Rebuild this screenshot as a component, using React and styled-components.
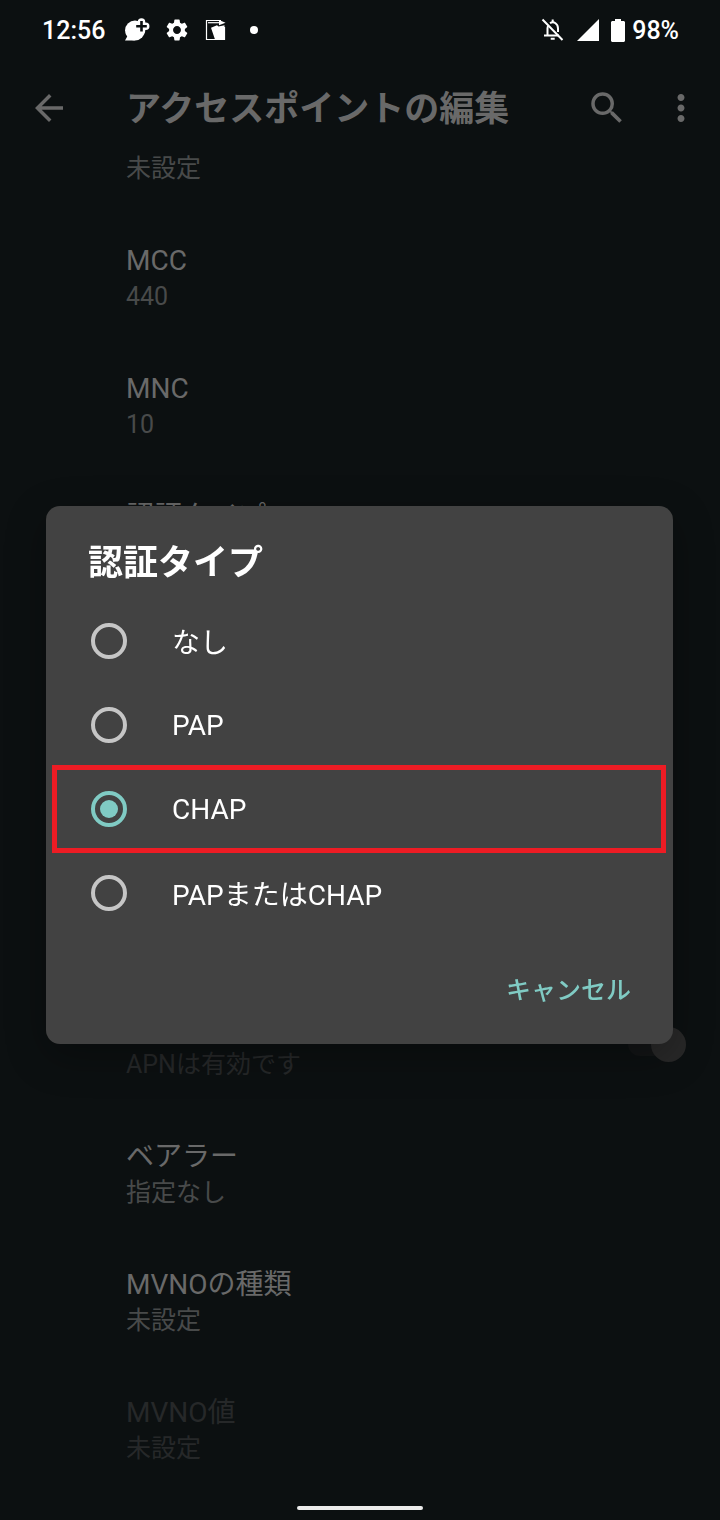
import styled, { createGlobalStyle, css } from 'styled-components';
import { MdArrowBack, MdMoreVert, MdSearch, MdSettings } from 'react-icons/md';

const GlobalStyle = createGlobalStyle`
  * {
    box-sizing: border-box;
  }
  body {
    margin: 0;
    background-color: #0c1011;
    color: #696969;
    font-family: Roboto, "Noto Sans CJK JP", sans-serif;
  }
`;

const Screen = styled.div`
  display: flex;
  flex-direction: column;
  min-height: 100vh;
`;

const StatusBar = styled.header`
  display: flex;
  justify-content: space-between;
  height: 64px;
  padding: 0 41px 4px 42px;
  color: white;
  font-size: 25px;
  font-weight: 500;
`;

const StatusGroup = styled.div`
  display: flex;
  align-items: center;
  gap: ${props => props.$gap};

  svg {
    display: block;
  }
`;

const AppBar = styled.div`
  display: flex;
  align-items: center;
  height: 87px;
  padding: 0 18px 0 28px;
`;

const IconButton = styled.button`
  display: flex;
  padding: 0;
  border: 0;
  background: none;
  color: #696969;
  font-size: 42px;
`;

const PageTitle = styled.h1`
  flex: 1;
  margin: 0 0 0 56px;
  padding-top: 4px;
  font-size: 35px;
  font-weight: 700;
  line-height: 48px;
`;

const AppBarActions = styled.div`
  display: flex;
  gap: 32px;
`;

const List = styled.ul`
  flex: 1;
  margin: 0;
  padding: 0;
  list-style: none;
`;

const Preference = styled.li`
  display: flex;
  align-items: flex-start;
  justify-content: space-between;
  min-height: 128px;
  padding: 28px 34px 28px 126px;

  ${props => props.$scrolled && css`
    min-height: 64px;
    padding-top: 0;
  `}
  ${props => props.$below && css`
    align-items: center;
    margin-top: 384px;
    padding-top: 22px;
  `}
`;

const PrefText = styled.label`
  align-self: ${props => (props.$end ? 'flex-end' : 'flex-start')};
`;

const PrefTitle = styled.div`
  color: ${props => (props.$disabled ? '#262829' : '#696969')};
  font-size: 28px;
  line-height: 36px;
`;

const PrefSummary = styled.div`
  color: ${props => (props.$disabled ? '#262829' : '#484a4a')};
  font-size: 25px;
  line-height: 36px;
`;

const Switch = styled.input`
  appearance: none;
  display: flex;
  align-items: center;
  justify-content: flex-end;
  width: 58px;
  height: 24px;
  margin: 0;
  border-radius: 12px;
  background-color: #131516;

  &::before {
    content: "";
    width: 35px;
    height: 35px;
    flex: none;
    border-radius: 50%;
    background-color: #282828;
  }
`;

const NavBar = styled.footer`
  display: flex;
  align-items: center;
  justify-content: center;
  height: 25px;
`;

const HomeHandle = styled.div`
  width: 126px;
  height: 4px;
  border-radius: 2px;
  background-color: #ececec;
`;

const Overlay = styled.div`
  position: fixed;
  inset: 0;
  display: flex;
  align-items: center;
  padding: 30px 47px 0 46px;
`;

const Dialog = styled.form`
  flex: 1;
  border-radius: 14px;
  background-color: #424242;
  box-shadow: 0 12px 40px rgba(0, 0, 0, 0.3);
  color: white;
`;

const DialogTitle = styled.h2`
  margin: 0;
  padding: 38px 42px 15px;
  font-size: 35px;
  font-weight: 700;
  line-height: 40px;
`;

const Option = styled.label`
  position: relative;
  display: flex;
  align-items: center;
  gap: 45px;
  height: 84px;
  padding: 0 45px;
  font-size: 28px;

  ${props => props.$marked && css`
    &::after {
      content: "";
      position: absolute;
      inset: -2px 7px -2px 6px;
      border: 5px solid #ed1c24;
    }
  `}
`;

const Radio = styled.input`
  appearance: none;
  width: 36px;
  height: 36px;
  margin: 0;
  padding: 5px;
  border: 4px solid #c6c6c6;
  border-radius: 50%;

  &:checked {
    border-color: #80cbc4;
    background: #80cbc4 content-box;
  }
`;

const DialogActions = styled.div`
  display: flex;
  justify-content: flex-end;
  padding: 23px 42px 26px;
`;

const TextButton = styled.button`
  height: 60px;
  padding: 0;
  border: 0;
  background: none;
  color: #80cbc4;
  font: inherit;
  font-size: 25px;
  font-weight: 500;
`;

const ChatPlusIcon = () => (
  <svg width="26" height="24" viewBox="0 0 26 24">
    <circle cx="11" cy="12.5" r="10" fill="white" />
    <path d="M1.500 14L3.500 18L1 22.500H11Z" fill="white" />
    <path d="M17.500 4V12.500M13.300 8.300H21.700" stroke="white" strokeWidth="7.500" strokeLinecap="round" />
    <path d="M17.500 3V13.600M12.200 8.300H22.800" stroke="#0c1011" strokeWidth="2.600" />
  </svg>
);

const CardsIcon = () => (
  <svg width="22" height="22" viewBox="0 0 22 22">
    <path d="M17 1.500H2.500V20.500H20.500V8" fill="none" stroke="white" strokeWidth="1.200" />
    <path d="M4 3.700H16" stroke="white" strokeWidth="1.200" />
    <path fill="white" d="M15 1L21.500 3.700L15 6.200Z" />
    <path fill="white" d="M7 8.800L13 6.300L14.500 7.500L20.500 6.300V20.500H11Z" />
  </svg>
);

const DotIcon = () => (
  <svg width="24" height="10" viewBox="0 0 24 10">
    <circle cx="12" cy="5" r="4" fill="white" />
  </svg>
);

const BellOffIcon = () => (
  <svg width="24" height="24" viewBox="0 0 24 24" fill="none" stroke="white" strokeWidth="2">
    <path d="M6.500 17.500V10.500C6.500 9.500 6.700 8.500 7.200 7.700M9 5.200C13 2.800 17 6 17 10.500V14M3 17.500H18" />
    <path d="M11.700 1.500V4.500M9.700 20.700H13.700M1.500 1.500L21.500 22" />
  </svg>
);

const SignalIcon = () => (
  <svg width="22" height="22" viewBox="0 0 22 22">
    <path fill="white" d="M0 22L22 0V22Z" />
  </svg>
);

const BatteryIcon = () => (
  <svg width="14" height="23" viewBox="0 0 14 23">
    <path fill="white" d="M4 0H10V2H13L14 3V22L13 23H1L0 22V3L1 2H4Z" />
  </svg>
);

const preferences = [
  { id: 'mcc', title: 'MCC', summary: '440' },
  { id: 'mnc', title: 'MNC', summary: '10' },
  { id: 'auth', title: '認証タイプ' },
  { id: 'apn', summary: 'APNは有効です', disabled: true, below: true, toggle: true },
  { id: 'bearer', title: 'ベアラー', summary: '指定なし' },
  { id: 'mvno-type', title: 'MVNOの種類', summary: '未設定' },
  { id: 'mvno-value', title: 'MVNO値', summary: '未設定', disabled: true },
];

const options = ['なし', 'PAP', 'CHAP', 'PAPまたはCHAP'];

const App = () => {
  return (
    <>
      <GlobalStyle />
      <Screen>
        <StatusBar>
          <StatusGroup $gap="19px">
            <span>12:56</span>
            <StatusGroup $gap="16px">
              <ChatPlusIcon />
              <MdSettings size={22} viewBox="2 2 20 20" />
              <CardsIcon />
              <DotIcon />
            </StatusGroup>
          </StatusGroup>
          <StatusGroup $gap="7px">
            <StatusGroup $gap="12px">
              <BellOffIcon />
              <SignalIcon />
              <BatteryIcon />
            </StatusGroup>
            <span>98%</span>
          </StatusGroup>
        </StatusBar>
        <AppBar>
          <IconButton aria-label="戻る"><MdArrowBack /></IconButton>
          <PageTitle>アクセスポイントの編集</PageTitle>
          <AppBarActions>
            <IconButton aria-label="検索"><MdSearch /></IconButton>
            <IconButton aria-label="メニュー"><MdMoreVert /></IconButton>
          </AppBarActions>
        </AppBar>
        <List>
          <Preference $scrolled>
            <PrefSummary>未設定</PrefSummary>
          </Preference>
          {preferences.map(pref => (
            <Preference key={pref.id} $below={pref.below}>
              <PrefText
                as={pref.toggle ? 'label' : 'div'}
                htmlFor={pref.toggle ? pref.id : undefined}
                $end={pref.below}
              >
                {pref.title && <PrefTitle $disabled={pref.disabled}>{pref.title}</PrefTitle>}
                {pref.summary && <PrefSummary $disabled={pref.disabled}>{pref.summary}</PrefSummary>}
              </PrefText>
              {pref.toggle && <Switch type="checkbox" role="switch" id={pref.id} defaultChecked disabled />}
            </Preference>
          ))}
        </List>
        <NavBar>
          <HomeHandle />
        </NavBar>
      </Screen>
      <Overlay>
        <Dialog role="dialog" aria-labelledby="dialog-title">
          <DialogTitle id="dialog-title">認証タイプ</DialogTitle>
          {options.map(option => (
            <Option key={option} $marked={option === 'CHAP'}>
              <Radio type="radio" name="auth" value={option} defaultChecked={option === 'CHAP'} />
              {option}
            </Option>
          ))}
          <DialogActions>
            <TextButton type="button">キャンセル</TextButton>
          </DialogActions>
        </Dialog>
      </Overlay>
    </>
  );
};

export default App;
